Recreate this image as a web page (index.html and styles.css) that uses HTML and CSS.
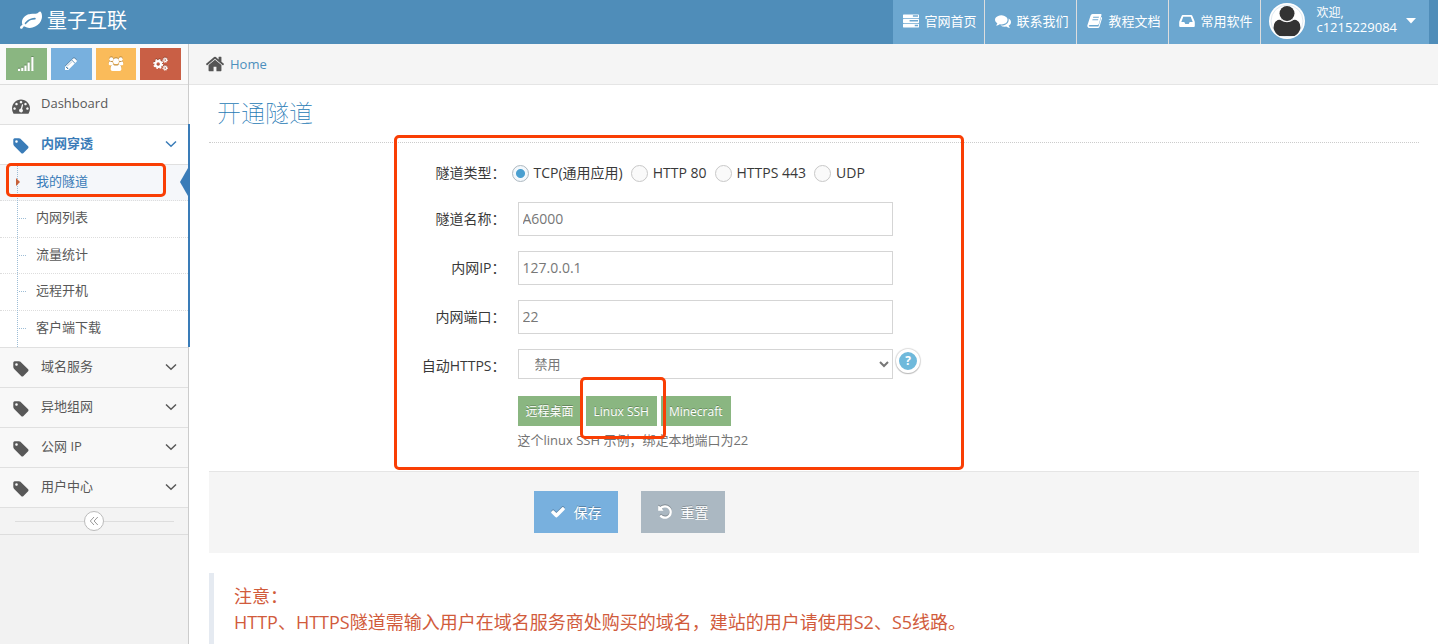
FILE: index.html
```html
<!DOCTYPE html>
<html lang="zh-CN">
<head>
<meta charset="utf-8">
<meta name="viewport" content="width=device-width, initial-scale=1">
<title>量子互联 - 开通隧道</title>
<link rel="stylesheet" href="styles.css">
</head>
<body>
<svg class="sprite" aria-hidden="true">
  <symbol id="i-tag" viewBox="0 0 1792 1792"><path d="M576 448q0-53-37.5-90.5t-90.5-37.5-90.5 37.5-37.5 90.5 37.5 90.5 90.5 37.5 90.5-37.5 37.5-90.5zm1067 576q0 53-37 90l-491 492q-39 37-91 37-53 0-90-37l-715-716q-38-37-64.500-101t-26.500-117v-416q0-52 38-90t90-38h416q53 0 117 26.500t102 64.500l715 714q37 39 37 91z"/></symbol>
  <symbol id="i-home" viewBox="0 0 1792 1792"><path d="M1472 992v480q0 26-19 45t-45 19h-384v-384h-256v384h-384q-26 0-45-19t-19-45v-480q0-1 .5-3t.5-3l575-474 575 474q1 2 1 6zm223-69l-62 74q-8 9-21 11h-3q-13 0-21-7l-692-577-692 577q-12 8-24 7-13-2-21-11l-62-74q-8-10-7-23.500t11-21.500l719-599q32-26 76-26t76 26l244 204v-195q0-14 9-23t23-9h192q14 0 23 9t9 23v408l219 182q10 8 11 21.500t-7 23.500z"/></symbol>
  <symbol id="i-check" viewBox="0 0 1792 1792"><path d="M1671 566q0 40-28 68l-724 724-136 136q-28 28-68 28t-68-28l-136-136-362-362q-28-28-28-68t28-68l136-136q28-28 68-28t68 28l294 295 656-657q28-28 68-28t68 28l136 136q28 28 28 68z"/></symbol>
  <symbol id="i-pencil" viewBox="0 0 1792 1792"><path d="M491 1536l91-91-235-235-91 91v107h128v128h107zm523-928q0-22-22-22-10 0-17 7l-542 542q-7 7-7 17 0 22 22 22 10 0 17-7l542-542q7-7 7-17zm-54-192l416 416-832 832h-416v-416zm683 96q0 53-37 90l-166 166-416-416 166-165q36-38 90-38 53 0 91 38l235 234q37 39 37 91z"/></symbol>
  <symbol id="i-undo" viewBox="0 0 1792 1792"><path d="M1664 896q0 156-61 298t-164 245-245 164-298 61q-172 0-327-72.500t-264-204.500q-7-10-6.500-22.500t8.500-20.500l137-138q10-9 25-9 16 2 23 12 73 95 179 147t225 52q104 0 198.500-40.500t163.500-109.500 109.500-163.500 40.500-198.500-40.500-198.500-109.500-163.500-163.500-109.500-198.500-40.500q-98 0-188 35.500t-160 101.500l137 138q31 30 14 69-17 40-59 40h-448q-26 0-45-19t-19-45v-448q0-42 40-59 39-17 69 14l130 129q107-101 244.500-156.500t284.500-55.500q156 0 298 61t245 164 164 245 61 298z"/></symbol>
  <symbol id="i-dash" viewBox="0 0 1792 1792"><path d="M384 1152q0-53-37.500-90.500t-90.500-37.500-90.500 37.500-37.500 90.500 37.500 90.500 90.500 37.500 90.500-37.500 37.500-90.500zm192-448q0-53-37.500-90.500t-90.500-37.500-90.500 37.500-37.500 90.500 37.500 90.500 90.500 37.500 90.500-37.500 37.500-90.500zm428 481l101-382q6-26-7.500-48.500t-38.500-29.500-48 6.500-30 39.500l-101 382q-60 5-107 43.500t-63 98.500q-20 77 20 146t117 89 146-20 89-117q16-60-6-117t-72-91zm660-33q0-53-37.500-90.500t-90.500-37.500-90.500 37.500-37.500 90.500 37.500 90.500 90.500 37.500 90.500-37.500 37.500-90.500zm-640-640q0-53-37.500-90.500t-90.500-37.500-90.500 37.500-37.500 90.500 37.500 90.500 90.500 37.500 90.500-37.500 37.500-90.500zm448 192q0-53-37.500-90.500t-90.500-37.500-90.500 37.500-37.500 90.500 37.500 90.500 90.500 37.500 90.500-37.500 37.500-90.500zm320 448q0 261-141 483-19 29-54 29h-1402q-35 0-54-29-141-221-141-483 0-182 71-348t191-286 286-191 348-71 348 71 286 191 191 286 71 348z"/></symbol>
  <symbol id="i-leaf" viewBox="0 0 1792 1792"><path d="M1280 704q0-26-19-45t-45-19q-172 0-318 49.500t-259.500 134-235.500 219.500q-19 21-19 45 0 26 19 45t45 19q24 0 45-19 27-24 74-71t67-66q137-124 268.500-176t313.500-52q26 0 45-19t19-45zm512-198q0 95-20 193-46 224-184.500 383t-357.500 268q-214 108-438 108-148 0-286-47-15-5-88-42t-96-37q-16 0-39.500 32t-45 70-52.500 70-60 32q-43 0-63.500-17.500t-45.500-59.500q-2-4-6-11t-5.500-10-3-9.500-1.500-13.500q0-35 31-73.500t68-65.500 68-56 31-48q0-4-14-38t-16-44q-9-51-9-104 0-115 43.500-220t119-184.500 170.500-139 204-95.500q55-18 145-25.500t179.500-9 178.500-6 163.500-24 113.500-56.500l29.500-29.500 29.500-28 27-20 36.500-16 43.500-4.500q39 0 70.500 46t47.500 112 24 124 8 96z"/></symbol>
  <symbol id="i-comments" viewBox="0 0 1792 1792"><path d="M1408 768q0 139-94 257t-256.500 186.500-353.500 68.500q-86 0-176-16-124 88-278 128-36 9-86 16h-3q-11 0-20.500-8t-11.500-21q-1-3-1-6.500t.5-6.500 2-6l2.500-5 3.500-5.500 4-5 4.500-5 4-4.500q5-6 23-25t26-29.500 22.500-29 25-38.500 20.500-44q-124-72-195-177t-71-224q0-139 94-257t256.500-186.500 353.500-68.500 353.500 68.500 256.500 186.500 94 257zm384 256q0 120-71 224.500t-195 176.500q10 24 20.500 44t25 38.500 22.500 29 26 29.500 23 25q1 1 4 4.500t4.500 5 4 5 3.500 5.500l2.500 5 2 6 .5 6.500-1 6.500q-3 14-13 22t-22 7q-50-7-86-16-154-40-278-128-90 16-176 16-271 0-472-132 58 4 88 4 161 0 309-45t264-129q125-92 192-212t67-254q0-77-23-152 129 71 204 178t75 230z"/></symbol>
  <symbol id="i-tasks" viewBox="0 0 17 14"><path fill-rule="evenodd" d="M.5 0h16q.5 0 .5.500v3q0 .5-.5.500H.5Q0 4 0 3.500v-3Q0 0 .5 0zM10.500 1v1.500H16V1zM.5 5h16q.5 0 .5.500v3q0 .5-.5.500H.5Q0 9 0 8.500v-3Q0 5 .5 5zM7 6v1.500h9V6zM.5 10h16q.5 0 .5.500v3q0 .5-.5.500H.5q-.5 0-.5-.500v-3Q0 10 .5 10zM12.500 11v1.500H16V11z"/></symbol>
  <symbol id="i-book" viewBox="0 0 16 16"><path fill-rule="evenodd" d="M5.500 1h8.200q1.100 0 .8 1.100L11.800 11q-.3 1-1.400 1H3q-1 0-1.200.6-.3.900.9.900h8.200q.5 0 .7-.6L14.300 4q1.100.3.700 1.600L12.400 14q-.3 1-1.500 1H2.600Q.9 15 .4 13.500q-.2-.7 0-1.300L3.600 2.600Q4.100 1 5.500 1zM6.300 3.800L6 4.800h5.700l.3-1zM5.600 6.200l-.3 1H11l.3-1z"/></symbol>
  <symbol id="i-inbox" viewBox="0 0 16 14"><path fill-rule="evenodd" d="M3.800 1h8.400q.8 0 1.100.7L15.500 7q.3.700.3 1.400V12q0 1-1 1H1.200q-1 0-1-1V8.400Q.2 7.700.5 7l2.200-5.300Q3 1 3.800 1zM4.300 2.800L2.300 8h3l1 2h3.400l1-2h3l-2-5.200z"/></symbol>
  <symbol id="i-signal" viewBox="0 0 15 13"><path d="M0 11h2v2H0zM3 10h2v3H3zM6 8h2v5H6zM9 5h2v8H9zM12.500 0h2v13h-2z"/></symbol>
  <symbol id="i-users" viewBox="0 0 16 15"><circle cx="3" cy="2.300" r="2.100"/><circle cx="13" cy="2.300" r="2.100"/><circle cx="8" cy="4.500" r="3.100"/><path d="M1.500 4.500Q3 5.700 4.300 5q.1 1.800 1.200 3Q4 8 3.200 8.800H1.600Q.2 8.800.2 7.500q0-2.700 1.300-3zM14.500 4.500q-1.500 1.200-2.800.5-.1 1.800-1.200 3 1.500 0 2.300.8h1.600q1.400 0 1.400-1.300 0-2.700-1.300-3zM4.800 8.300q3.200 1.800 6.400 0 2.600.3 2.600 4.500 0 2.200-2 2.200H4.200q-2 0-2-2.200 0-4.200 2.600-4.500z"/></symbol>
  <symbol id="i-cogs" viewBox="0 0 17 15"><g fill="none" stroke="currentColor"><circle cx="5.500" cy="7.500" r="3" stroke-width="2.400"/><circle cx="5.500" cy="7.500" r="4.600" stroke-width="1.600" stroke-dasharray="1.900 1.710"/><circle cx="13" cy="3.300" r="1.500" stroke-width="1.300"/><circle cx="13" cy="3.300" r="2.500" stroke-width="1" stroke-dasharray="1.100 .860"/><circle cx="13" cy="11.700" r="1.500" stroke-width="1.300"/><circle cx="13" cy="11.700" r="2.500" stroke-width="1" stroke-dasharray="1.100 .860"/></g></symbol>
  <symbol id="i-down" viewBox="0 0 12 8"><path d="M1 1.500l5 4.700 5-4.700" fill="none" stroke="currentColor" stroke-width="1.500"/></symbol>
  <symbol id="i-double-left" viewBox="0 0 10 10"><path d="M5 1L1.300 5 5 9M8.800 1L5.100 5l3.700 4" fill="none" stroke="currentColor"/></symbol>
</svg>

<header class="navbar">
  <a class="brand" href="#"><svg class="brand-icon"><use href="#i-leaf"/></svg>量子互联</a>
  <nav class="top-nav">
    <a class="top-link" href="#"><svg class="top-icon"><use href="#i-tasks"/></svg>官网首页</a>
    <a class="top-link" href="#"><svg class="top-icon"><use href="#i-comments"/></svg>联系我们</a>
    <a class="top-link" href="#"><svg class="top-icon"><use href="#i-book"/></svg>教程文档</a>
    <a class="top-link" href="#"><svg class="top-icon"><use href="#i-inbox"/></svg>常用软件</a>
    <a class="user" href="#">
      <svg class="avatar" viewBox="0 0 36 36"><circle cx="18" cy="18" r="18" fill="#fff"/><circle cx="18" cy="18" r="16" fill="none" stroke="#dfe9f0"/><circle cx="18" cy="10.500" r="7.500" fill="#333"/><path d="M4.500 25q0-8.500 7.500-8.500 6 4.500 12 0 7.500 0 7.500 8.500-1 5-6 8h-15q-5-3-6-8z" fill="#333"/><path d="M10.500 16q7.500 5.500 15 0" fill="none" stroke="#fff"/></svg>
      <span class="user-info"><small class="welcome">欢迎,</small><span class="user-name">c1215229084</span></span>
      <svg class="caret" viewBox="0 0 10 6"><path d="M0 0h10L5 5.500z"/></svg>
    </a>
  </nav>
</header>

<div class="layout">
  <aside class="sidebar">
    <div class="shortcuts">
      <button class="shortcut green" type="button" aria-label="统计"><svg class="shortcut-icon"><use href="#i-signal"/></svg></button>
      <button class="shortcut blue" type="button" aria-label="编辑"><svg class="shortcut-icon"><use href="#i-pencil"/></svg></button>
      <button class="shortcut orange" type="button" aria-label="用户"><svg class="shortcut-icon"><use href="#i-users"/></svg></button>
      <button class="shortcut red" type="button" aria-label="设置"><svg class="shortcut-icon"><use href="#i-cogs"/></svg></button>
    </div>
    <ul class="menu">
      <li class="menu-item"><a class="menu-link" href="#"><svg class="menu-icon"><use href="#i-dash"/></svg><span class="menu-text">Dashboard</span></a></li>
      <li class="menu-item open">
        <a class="menu-link" href="#"><svg class="menu-icon"><use href="#i-tag"/></svg><span class="menu-text">内网穿透</span><svg class="chevron"><use href="#i-down"/></svg></a>
        <ul class="submenu">
          <li class="sub-item active"><a class="sub-link" href="#">我的隧道</a><span class="mark mark-menu"></span></li>
          <li class="sub-item"><a class="sub-link" href="#">内网列表</a></li>
          <li class="sub-item"><a class="sub-link" href="#">流量统计</a></li>
          <li class="sub-item"><a class="sub-link" href="#">远程开机</a></li>
          <li class="sub-item"><a class="sub-link" href="#">客户端下载</a></li>
        </ul>
      </li>
      <li class="menu-item"><a class="menu-link" href="#"><svg class="menu-icon"><use href="#i-tag"/></svg><span class="menu-text">域名服务</span><svg class="chevron"><use href="#i-down"/></svg></a></li>
      <li class="menu-item"><a class="menu-link" href="#"><svg class="menu-icon"><use href="#i-tag"/></svg><span class="menu-text">异地组网</span><svg class="chevron"><use href="#i-down"/></svg></a></li>
      <li class="menu-item"><a class="menu-link" href="#"><svg class="menu-icon"><use href="#i-tag"/></svg><span class="menu-text">公网 IP</span><svg class="chevron"><use href="#i-down"/></svg></a></li>
      <li class="menu-item"><a class="menu-link" href="#"><svg class="menu-icon"><use href="#i-tag"/></svg><span class="menu-text">用户中心</span><svg class="chevron"><use href="#i-down"/></svg></a></li>
    </ul>
    <div class="collapse"><button class="collapse-button" type="button" aria-label="收起菜单"><svg class="collapse-icon"><use href="#i-double-left"/></svg></button></div>
  </aside>

  <main class="main">
    <nav class="breadcrumb"><svg class="home-icon"><use href="#i-home"/></svg><a class="crumb" href="#">Home</a></nav>
    <div class="content">
      <h1 class="title">开通隧道</h1>
      <form class="form">
        <div class="fields">
          <div class="row" role="radiogroup" aria-labelledby="type-label">
            <span class="label" id="type-label">隧道类型：</span>
            <div class="field radios">
              <label class="radio"><input class="radio-input" type="radio" name="type" checked>TCP(通用应用)</label>
              <label class="radio"><input class="radio-input" type="radio" name="type">HTTP 80</label>
              <label class="radio"><input class="radio-input" type="radio" name="type">HTTPS 443</label>
              <label class="radio"><input class="radio-input" type="radio" name="type">UDP</label>
            </div>
          </div>
          <div class="row"><label class="label" for="name">隧道名称：</label><div class="field"><input class="text-input" id="name" type="text" value="A6000"></div></div>
          <div class="row"><label class="label" for="ip">内网IP：</label><div class="field"><input class="text-input" id="ip" type="text" value="127.0.0.1"></div></div>
          <div class="row"><label class="label" for="port">内网端口：</label><div class="field"><input class="text-input" id="port" type="text" value="22"></div></div>
          <div class="row">
            <label class="label" for="https">自动HTTPS：</label>
            <div class="field">
              <span class="select-box"><select class="select" id="https"><option>禁用</option></select><svg class="select-arrow" viewBox="0 0 10 7"><path d="M1 1l4 4 4-4" fill="none" stroke="currentColor" stroke-width="2"/></svg></span>
              <button class="help" type="button">?</button>
            </div>
          </div>
          <div class="row">
            <span class="label"></span>
            <div class="field examples">
              <div class="example-list">
                <button class="example" type="button">远程桌面</button>
                <span class="marked"><button class="example" type="button">Linux SSH</button><span class="mark mark-example"></span></span>
                <button class="example" type="button">Minecraft</button>
              </div>
              <p class="hint">这个linux SSH 示例，绑定本地端口为22</p>
            </div>
          </div>
          <span class="mark mark-form"></span>
        </div>
        <div class="actions">
          <button class="action save" type="button"><svg class="action-icon"><use href="#i-check"/></svg>保存</button>
          <button class="action reset" type="reset"><svg class="action-icon"><use href="#i-undo"/></svg>重置</button>
        </div>
      </form>
      <blockquote class="notice">注意：<br>HTTP、HTTPS隧道需输入用户在域名服务商处购买的域名，建站的用户请使用S2、S5线路。</blockquote>
    </div>
  </main>
</div>
</body>
</html>
```
FILE: styles.css
```css
* { box-sizing: border-box; }

body {
  margin: 0;
  min-height: 100vh;
  display: flex;
  flex-direction: column;
  overflow: hidden;
  background: #fff;
  color: #393939;
  font: 13px/20px "Open Sans", "Noto Sans CJK SC", sans-serif;
}

a { color: inherit; text-decoration: none; }
button, input, select { font-family: inherit; }
button { border: 0; padding: 0; cursor: pointer; }
ul { margin: 0; padding: 0; list-style: none; }
svg { display: block; flex: none; fill: currentColor; }
.sprite { position: absolute; width: 0; height: 0; }

/* Top bar */
.navbar {
  display: flex;
  justify-content: space-between;
  height: 44px;
  padding: 0 9px 0 20px;
  background: #4f8db9;
  color: #fff;
}
.brand { display: flex; align-items: center; gap: 5px; padding-bottom: 2px; font-size: 20px; }
.brand-icon { width: 22px; height: 22px; }
.top-nav { display: flex; }
.top-link {
  display: flex;
  align-items: center;
  gap: 5px;
  padding: 0 8px 2px 10px;
  border-right: 1px solid #ddd;
  background: #6ca7d0;
}
.top-icon { width: 16px; height: 16px; }
.user {
  display: flex;
  align-items: center;
  padding: 0 13px 3px 8px;
  background: #6ca7d0;
}
.avatar { width: 36px; height: 36px; }
.user-info { display: flex; flex-direction: column; margin: 0 9px 0 11px; line-height: 15px; }
.welcome { font-size: 12px; line-height: 14px; }
.caret { width: 10px; height: 6px; }

/* Sidebar */
.layout { display: flex; flex: 1; }
.sidebar {
  flex: none;
  width: 189px;
  border-right: 1px solid #ccc;
  background: #f2f2f2;
}
.shortcuts {
  display: flex;
  gap: 4px;
  padding: 4px 7px 4px 6px;
  border-bottom: 1px solid #ddd;
  background: #fafafa;
}
.shortcut {
  display: flex;
  flex: 1;
  align-items: center;
  justify-content: center;
  height: 32px;
  color: #fff;
}
.shortcut-icon { width: 16px; height: 14px; filter: drop-shadow(0 -1px 0 rgba(0, 0, 0, .25)); }
.green { background: #8ab681; }
.blue { background: #78b0de; }
.orange { background: #fabb5a; }
.red { background: #c95f45; }

.menu-item { position: relative; border-bottom: 1px solid #e0e0e0; background: #f8f8f8; color: #585858; }
.menu-link { display: flex; align-items: center; height: 39px; padding: 0 11px 2px 12px; }
.menu-icon { width: 18px; height: 18px; margin: 4px 11px 0 0; }
.menu-text { flex: 1; padding-bottom: 2px; }
.chevron { width: 12px; height: 8px; }
.open { background: #fff; }
.open > .menu-link { color: #3a7cb8; font-weight: bold; }
.open::after {
  content: "";
  position: absolute;
  top: -1px;
  right: -2px;
  bottom: 0;
  width: 2px;
  background: #3a7cb8;
}
.submenu {
  position: relative;
  display: grid;
  grid-auto-rows: 1fr;
  min-height: 183px;
  border-top: 1px solid #e0e0e0;
}
.submenu::before {
  content: "";
  position: absolute;
  z-index: 1;
  top: 0;
  bottom: 0;
  left: 17px;
  border-left: 1px dotted #9dbdd6;
}
.sub-item { position: relative; display: flex; border-bottom: 1px dotted #ddd; }
.sub-item:last-child { border-bottom: 0; }
.sub-item::before {
  content: "";
  position: absolute;
  top: 17px;
  left: 19px;
  width: 7px;
  border-top: 1px dotted #9dbdd6;
}
.sub-link { flex: 1; padding: 6px 0 8px 36px; }
.active { background: #f5f7fa; color: #3a7cb8; }
.active::before {
  z-index: 2;
  top: 13px;
  left: 16px;
  width: 0;
  border: 4px solid transparent;
  border-right: 0;
  border-left-color: #c86139;
}
.active::after {
  content: "";
  position: absolute;
  top: 3px;
  right: 0;
  border: 14px solid transparent;
  border-left: 0;
  border-right: 8px solid #3a7cb8;
}
.collapse {
  display: flex;
  justify-content: center;
  padding: 3px 0;
  border-bottom: 1px solid #ddd;
  background: linear-gradient(#ddd, #ddd) center / calc(100% - 29px) 1px no-repeat #f3f3f3;
}
.collapse-button {
  display: flex;
  align-items: center;
  justify-content: center;
  width: 20px;
  height: 20px;
  border: 1px solid #bbb;
  border-radius: 50%;
  background: #fff;
  color: #999;
}
.collapse-icon { width: 10px; height: 10px; }

/* Page */
.main { flex: 1; min-width: 0; }
.breadcrumb {
  display: flex;
  align-items: center;
  gap: 5px;
  height: 41px;
  padding: 0 16px;
  border-bottom: 1px solid #e5e5e5;
  background: #f5f5f5;
}
.home-icon { width: 20px; height: 20px; color: #555; }
.crumb { color: #4c8fbd; }
.content { padding: 8px 19px 24px 20px; }
.title {
  margin: 0;
  padding: 4px 8px 13px;
  border-bottom: 1px dotted #ccc;
  color: #2679b5;
  font-size: 24px;
  font-weight: 100;
  line-height: 32px;
}

/* Form */
.fields {
  position: relative;
  display: grid;
  gap: 15px;
  padding: 15px 0 20px;
  font-size: 14px;
}
.row { display: flex; margin: 0 -12px; }
.label { flex: none; width: 25%; padding-top: 7px; text-align: right; }
.field { display: flex; flex: 1; align-items: flex-start; padding: 0 12px; }
.radios { flex-wrap: wrap; gap: 8px; padding: 4px 0 3px 6px; }
.radio { display: flex; align-items: center; gap: 5px; height: 22px; }
.row:first-child .label { padding-top: 5px; }
.radio-input {
  appearance: none;
  width: 17px;
  height: 17px;
  margin: 1px 0 0;
  border: 1px solid #c8c8c8;
  border-radius: 50%;
  background: #fafafa;
}
.radio-input:checked {
  border-color: #adb8c0;
  background: radial-gradient(circle, #4a9fd0 4px, #f3f8fc 5px);
}
.text-input, .select-box { width: calc(100% * 5 / 12); }
.text-input {
  height: 34px;
  padding: 5px 4px 6px;
  border: 1px solid #d5d5d5;
  border-radius: 0;
  background: #fff;
  color: #777;
  font-size: 14px;
}
.select-box { position: relative; display: flex; }
.select {
  appearance: none;
  width: 100%;
  height: 30px;
  padding: 0 24px 0 16px;
  border: 1px solid #d5d5d5;
  border-radius: 0;
  background: #fff;
  color: #777;
  font-size: 13px;
}
.select-arrow { position: absolute; top: 12px; right: 4px; width: 10px; height: 7px; color: #777; }
.help {
  width: 24px;
  height: 24px;
  margin-left: 3px;
  border: 3px solid #fff;
  border-radius: 50%;
  background: #6fb9db;
  box-shadow: 0 1px 1px #bbb, 0 0 1px 1px #ddd;
  color: #fff;
  font-size: 12px;
  font-weight: bold;
  line-height: 18px;
}
.examples { flex-direction: column; padding-top: 2px; }
.example-list { display: flex; gap: 4px; }
.marked { position: relative; display: flex; }
.example {
  height: 30px;
  padding: 0 8px;
  background: #8ab681;
  color: #fff;
  font-size: 12px;
  text-shadow: 0 -1px 0 rgba(0, 0, 0, .25);
}
.hint { margin: 4px 0 1px; color: #737373; font-size: 13px; }

.actions {
  display: flex;
  gap: 23px;
  padding: 19px 12px 20px calc(25% + 22px);
  border-top: 1px solid #e5e5e5;
  background: #f5f5f5;
}
.action {
  display: flex;
  align-items: center;
  gap: 8px;
  height: 42px;
  padding: 0 16px 1px;
  color: #fff;
  font-size: 14px;
  text-shadow: 0 -1px 0 rgba(0, 0, 0, .25);
}
.action-icon { width: 16px; height: 16px; filter: drop-shadow(0 -1px 0 rgba(0, 0, 0, .25)); }
.save { background: #78b0de; }
.reset { background: #abb8c2; }

.notice {
  margin: 20px 0 0;
  padding: 10px 20px;
  border-left: 5px solid #e5eaf1;
  color: #d15b3c;
  font-size: 18px;
  line-height: 26px;
}

/* Highlight frames drawn over the content */
.mark {
  position: absolute;
  z-index: 3;
  border: 3px solid #f93e04;
  border-radius: 5px;
  pointer-events: none;
}
.mark-menu { inset: -2px 22px 3px 6px; }
.mark-form { top: -8px; bottom: 1px; left: 185px; width: 570px; }
.mark-example { inset: -19px -9px -13px -6px; }
```
